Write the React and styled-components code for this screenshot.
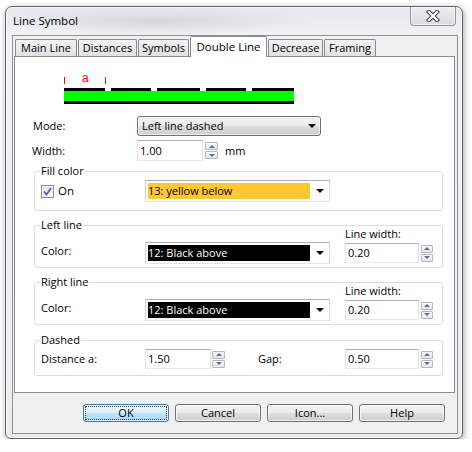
import React from 'react';
import styled, { createGlobalStyle } from 'styled-components';

const GlobalStyle = createGlobalStyle`
  html, body {
    margin: 0;
    padding: 0;
    background: #fff;
  }
  body {
    font-family: "Segoe UI", "Open Sans", "Noto Sans", Arial, sans-serif;
    font-size: 11px;
    color: #000;
  }
`;

const Page = styled.div`
  padding: 6px 0 0 5px;
`;

const Window = styled.div`
  box-sizing: border-box;
  width: 458px;
  height: 433px;
  border: 1px solid #5d6167;
  border-radius: 7px 7px 6px 6px;
  background:
    radial-gradient(ellipse 160px 14px at 150px 14px, rgba(170, 176, 184, 0.35), transparent),
    linear-gradient(180deg, #e6e9ed 0%, #f1f2f4 30px, #ececec 100%);
  box-shadow: 1px 2px 7px rgba(0, 0, 0, 0.35), inset 0 0 0 1px rgba(255, 255, 255, 0.75);
  display: flex;
  flex-direction: column;
`;

const TitleBar = styled.div`
  height: 28px;
  display: flex;
  align-items: flex-start;
  justify-content: space-between;
`;

const Title = styled.div`
  padding: 6px 0 0 7px;
  font-size: 11.5px;
  line-height: 16px;
  color: #000;
`;

const CloseButton = styled.div`
  box-sizing: border-box;
  width: 46px;
  height: 19px;
  margin-right: 6px;
  border: 1px solid #8d939c;
  border-top: none;
  border-radius: 0 0 4px 4px;
  background: linear-gradient(180deg, #eef0f3 0%, #e2e5e9 50%, #d7dbe0 100%);
  box-shadow: inset 0 0 0 1px rgba(255, 255, 255, 0.6);
  display: flex;
  align-items: center;
  justify-content: center;
`;

const Client = styled.div`
  box-sizing: border-box;
  width: 446px;
  height: 399px;
  margin: 0 4px 4px 6px;
  border: 1px solid #8f9294;
  background: #f0f0f0;
  display: flex;
  flex-direction: column;
`;

const TabControl = styled.div`
  margin: 0 2px 0 1px;
  display: flex;
  flex-direction: column;
`;

const TabStrip = styled.div`
  height: 20px;
  padding-left: 1px;
  display: flex;
  align-items: flex-end;
  gap: 1px;
`;

const Tab = styled.div`
  box-sizing: border-box;
  width: ${(p) => p.$w}px;
  height: ${(p) => (p.$active ? 21 : 17)}px;
  margin-bottom: ${(p) => (p.$active ? -1 : 0)}px;
  border: 1px solid #898c95;
  border-bottom: none;
  border-radius: 2px 2px 0 0;
  background: ${(p) => (p.$active ? '#fff' : 'linear-gradient(180deg, #f3f3f3 0%, #ebebeb 50%, #e1e1e1 100%)')};
  position: relative;
  z-index: ${(p) => (p.$active ? 1 : 0)};
  display: flex;
  align-items: center;
  justify-content: center;
  white-space: nowrap;
  line-height: 14px;
  font-size: ${(p) => (p.$active ? 11.5 : 11)}px;
`;

const Panel = styled.div`
  box-sizing: border-box;
  height: 337px;
  border: 1px solid #898c95;
  background: #fff;
  display: flex;
  flex-direction: column;
`;

const PreviewSvg = styled.svg`
  display: block;
  margin: 15px 0 0 49px;
`;

const FormRow = styled.div`
  display: flex;
  align-items: center;
  margin-top: ${(p) => p.$mt}px;
  padding-left: ${(p) => p.$pl}px;
`;

const FieldLabel = styled.div`
  width: ${(p) => p.$w}px;
  margin-left: ${(p) => p.$ml || 0}px;
  flex-shrink: 0;
  line-height: 14px;
  white-space: nowrap;
`;

const DropButton = styled.div`
  box-sizing: border-box;
  width: 184px;
  height: 20px;
  border: 1px solid #707070;
  border-radius: 3px;
  background: linear-gradient(180deg, #f2f2f2 0%, #ebebeb 50%, #dddddd 50%, #cfcfcf 100%);
  box-shadow: inset 0 0 0 1px rgba(255, 255, 255, 0.6);
  display: flex;
  align-items: center;
  padding-left: 4px;
`;

const DropText = styled.span`
  flex: 1;
  line-height: 14px;
`;

const Arrow = styled.span`
  width: 0;
  height: 0;
  border-left: 4px solid transparent;
  border-right: 4px solid transparent;
  border-top: 4px solid #000;
  margin-right: ${(p) => p.$mr}px;
`;

const TextBox = styled.div`
  box-sizing: border-box;
  width: ${(p) => p.$w}px;
  height: ${(p) => p.$h}px;
  border: 1px solid;
  border-color: #abadb3 #dbdfe6 #e3e9ef #e2e3ea;
  background: #fff;
  padding-left: 2px;
  display: flex;
  align-items: center;
  line-height: 14px;
`;

const Spin = styled.div`
  width: ${(p) => p.$w}px;
  margin-left: ${(p) => p.$ml}px;
  display: flex;
  flex-direction: column;
  gap: 1px;
`;

const SpinButton = styled.div`
  box-sizing: border-box;
  height: 8px;
  border: 1px solid #b3b7be;
  border-radius: 1px;
  background: linear-gradient(180deg, #f7f7f7 0%, #e6e6e6 100%);
  display: flex;
  align-items: center;
  justify-content: center;
`;

const SpinGlyph = styled.span`
  width: 0;
  height: 0;
  border-left: 3px solid transparent;
  border-right: 3px solid transparent;
  ${(p) => (p.$up ? 'border-bottom: 3px solid #56709f;' : 'border-top: 3px solid #56709f;')}
`;

const Unit = styled.span`
  margin-left: 7px;
  line-height: 14px;
`;

const Group = styled.fieldset`
  min-width: 0;
  margin: ${(p) => p.$mt}px 11px 0 19px;
  padding: ${(p) => p.$pt}px 6px ${(p) => p.$pb}px;
  border: 1px solid #d5dfe5;
  border-radius: 3px;
`;

const Legend = styled.legend`
  padding: 0 1px;
  margin-left: -1px;
  line-height: 14px;
  font-size: 11px;
`;

const GroupRow = styled.div`
  display: flex;
  align-items: ${(p) => p.$align || 'center'};
`;

const CheckLabel = styled.label`
  width: 104px;
  flex-shrink: 0;
  display: flex;
  align-items: center;
  gap: 4px;
  line-height: 14px;
  font-size: 11.5px;
`;

const CheckBox = styled.span`
  box-sizing: border-box;
  width: 13px;
  height: 13px;
  border: 1px solid #8e8f8f;
  background: linear-gradient(135deg, #dcdcdc 0%, #f4f4f4 70%, #ffffff 100%);
  box-shadow: inset 0 0 0 1px #f4f4f4;
  display: flex;
  align-items: center;
  justify-content: center;
`;

const ColorCombo = styled.div`
  box-sizing: border-box;
  width: 185px;
  height: 22px;
  border: 1px solid;
  border-color: #abadb3 #d3d6dc #dfe2e7 #d3d6dc;
  background: #fff;
  padding: 2px;
  display: flex;
  align-items: stretch;
  flex-shrink: 0;
`;

const Swatch = styled.div`
  width: 162px;
  background: ${(p) => p.$bg};
  color: ${(p) => p.$fg};
  display: flex;
  align-items: center;
  padding-left: 0;
  box-sizing: border-box;
  line-height: 14px;
  white-space: nowrap;
`;

const ComboArrowBox = styled.div`
  flex: 1;
  display: flex;
  align-items: center;
  justify-content: center;
  padding-left: 2px;
`;

const LineColor = styled.div`
  width: 104px;
  flex-shrink: 0;
  align-self: center;
  padding-top: 5px;
  line-height: 14px;
`;

const WidthColumn = styled.div`
  margin: -5px 0 1px 15px;
  display: flex;
  flex-direction: column;
  gap: 2px;
`;

const InputRow = styled.div`
  display: flex;
  align-items: center;
`;

const ButtonRow = styled.div`
  margin-top: 11px;
  padding-right: 12px;
  display: flex;
  justify-content: flex-end;
  gap: 6px;
`;

const Button = styled.button`
  box-sizing: border-box;
  width: 86px;
  height: 18px;
  padding: 0;
  font: inherit;
  font-size: 11px;
  line-height: 14px;
  color: #000;
  border: 1px solid ${(p) => (p.$default ? '#3c7fb1' : '#707070')};
  border-radius: 3px;
  background: ${(p) =>
    p.$default
      ? 'linear-gradient(180deg, #eaf6fd 0%, #d9f0fc 50%, #bee6fd 50%, #a7d9f5 100%)'
      : 'linear-gradient(180deg, #f2f2f2 0%, #ebebeb 50%, #dddddd 50%, #cfcfcf 100%)'};
  box-shadow: inset 0 0 0 1px rgba(255, 255, 255, 0.65);
  outline: ${(p) => (p.$default ? '1px dotted #3a3a3a' : 'none')};
  outline-offset: -3px;
`;

const tabs = [
  { label: 'Main Line', w: 62 },
  { label: 'Distances', w: 59 },
  { label: 'Symbols', w: 51 },
  { label: 'Double Line', w: 77, active: true },
  { label: 'Decrease', w: 55 },
  { label: 'Framing', w: 52 },
];

const dashes = [
  [0, 41],
  [47, 40],
  [93, 43],
  [142, 40],
  [188, 42],
];

const Spinner = ({ w = 13, ml = 2 }) => (
  <Spin $w={w} $ml={ml}>
    <SpinButton>
      <SpinGlyph $up />
    </SpinButton>
    <SpinButton>
      <SpinGlyph />
    </SpinButton>
  </Spin>
);

const Preview = () => (
  <PreviewSvg width="230" height="32" viewBox="0 0 230 32">
    <rect x="0" y="5" width="1" height="7" fill="#f00" />
    <rect x="41" y="5" width="1" height="7" fill="#f00" />
    <text x="18" y="10" fill="#f00" fontSize="12" fontFamily="Arial, 'Liberation Sans', sans-serif">
      a
    </text>
    {dashes.map(([x, w]) => (
      <rect key={x} x={x} y="16" width={w} height="3" fill="#000" />
    ))}
    <rect x="0" y="19" width="230" height="10" fill="#00ff00" />
    <rect x="0" y="29" width="230" height="3" fill="#000" />
  </PreviewSvg>
);

const LineGroup = ({ title, mt }) => (
  <Group $mt={mt} $pt={0} $pb={3}>
    <Legend>{title}</Legend>
    <GroupRow $align="flex-end">
      <LineColor>Color:</LineColor>
      <ColorCombo>
        <Swatch $bg="#000" $fg="#fff">12: Black above</Swatch>
        <ComboArrowBox>
          <Arrow $mr={0} />
        </ComboArrowBox>
      </ColorCombo>
      <WidthColumn>
        <FieldLabel $w={80}>Line width:</FieldLabel>
        <InputRow>
          <TextBox $w={74} $h={20}>0.20</TextBox>
          <Spinner w={12} ml={2} />
        </InputRow>
      </WidthColumn>
    </GroupRow>
  </Group>
);

const App = () => (
  <Page>
    <GlobalStyle />
    <Window>
      <TitleBar>
        <Title>Line Symbol</Title>
        <CloseButton>
          <svg width="16" height="12" viewBox="0 0 16 12">
            <path d="M4 2 L12 10 M12 2 L4 10" stroke="#3a4150" strokeWidth="4.2" strokeLinecap="square" />
            <path d="M4 2 L12 10 M12 2 L4 10" stroke="#ffffff" strokeWidth="2.2" strokeLinecap="square" />
          </svg>
        </CloseButton>
      </TitleBar>

      <Client>
        <TabControl>
          <TabStrip>
            {tabs.map((t) => (
              <Tab key={t.label} $w={t.w} $active={t.active}>
                {t.label}
              </Tab>
            ))}
          </TabStrip>

          <Panel>
            <Preview />

            <FormRow $mt={12} $pl={18}>
              <FieldLabel $w={104}>Mode:</FieldLabel>
              <DropButton>
                <DropText>Left line dashed</DropText>
                <Arrow $mr={4} />
              </DropButton>
            </FormRow>

            <FormRow $mt={4} $pl={17}>
              <FieldLabel $w={105}>Width:</FieldLabel>
              <TextBox $w={66} $h={21}>1.00</TextBox>
              <Spinner w={13} ml={2} />
              <Unit>mm</Unit>
            </FormRow>

            <Group $mt={3} $pt={2} $pb={8}>
              <Legend>Fill color</Legend>
              <GroupRow>
                <CheckLabel>
                  <CheckBox>
                    <svg width="9" height="9" viewBox="0 0 9 9">
                      <path d="M1 4.5 L3.5 7.5 L8 1" fill="none" stroke="#4a68b0" strokeWidth="1.8" />
                    </svg>
                  </CheckBox>
                  On
                </CheckLabel>
                <ColorCombo>
                  <Swatch $bg="#fdc830" $fg="#000">13: yellow below</Swatch>
                  <ComboArrowBox>
                    <Arrow $mr={0} />
                  </ComboArrowBox>
                </ColorCombo>
              </GroupRow>
            </Group>

            <LineGroup title="Left line" mt={7} />
            <LineGroup title="Right line" mt={7} />

            <Group $mt={8} $pt={2} $pb={6}>
              <Legend>Dashed</Legend>
              <GroupRow>
                <FieldLabel $w={104}>Distance a:</FieldLabel>
                <TextBox $w={66} $h={20}>1.50</TextBox>
                <Spinner w={13} ml={1} />
                <FieldLabel $w={87} $ml={33}>Gap:</FieldLabel>
                <TextBox $w={74} $h={20}>0.50</TextBox>
                <Spinner w={12} ml={2} />
              </GroupRow>
            </Group>
          </Panel>
        </TabControl>

        <ButtonRow>
          <Button $default>OK</Button>
          <Button>Cancel</Button>
          <Button>Icon...</Button>
          <Button>Help</Button>
        </ButtonRow>
      </Client>
    </Window>
  </Page>
);

export default App;
